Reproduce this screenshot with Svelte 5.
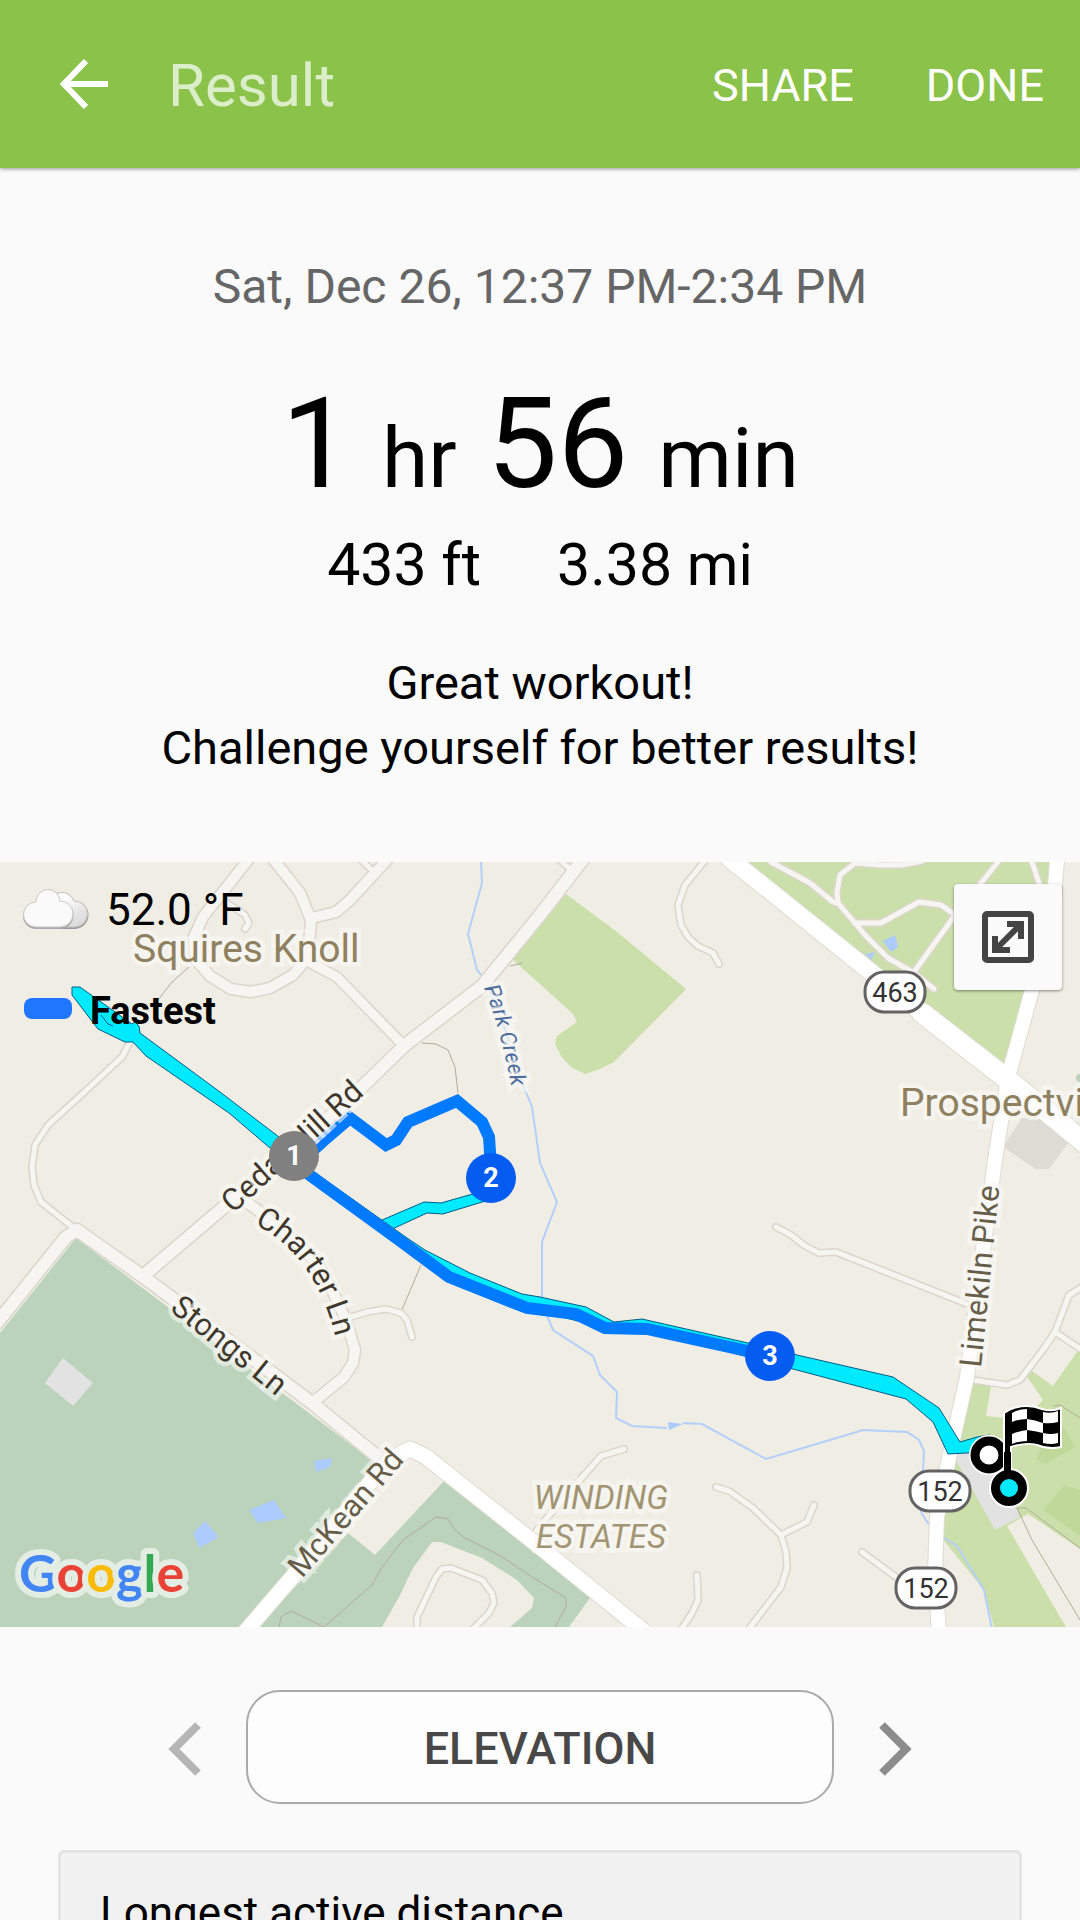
<script>
  const stats = [
    { id: 'elevation', text: '433 ft' },
    { id: 'distance', text: '3.38 mi' }
  ];

  // Minor roads: w is the width of the light inner line
  const streets = [
    { w: 5, d: 'M130 180 L122 195 L79 235 L48 263 L35 283 L32 305 L34 323 L41 340 L74 366' },
    { w: 5, d: 'M227 41 L245 53 L249 61 L245 67' },
    { w: 5, d: 'M348 456 L367 450 L386 447 L401 451 L407 458 L412 475' },
    { w: 5, d: 'M624 587 L601 594 L578 620 L540 664 L530 678' },
    { w: 5, d: 'M716 625 L729 629 L753 646 L781 673 L786 690 L787 706 L781 725 L748 768' },
    { w: 5, d: 'M781 673 L807 660 L814 643' },
    { w: 5, d: 'M697 713 L698 738 L692 751 L681 768' },
    { w: 5, d: 'M862 690 L900 718' },
    { w: 5, d: 'M776 365 L791 373 L805 384 L819 391 L836 390 L967 442' },
    { w: 5, d: 'M704 0 L685 23 L678 43 L681 63 L688 75 L698 84 L713 91 L719 102' },
    { w: 5, d: 'M973 518 L1007 523 L1020 518 L1045 485 L1055 470 L1069 433 L1082 425' },
    { w: 5, d: 'M1055 470 L1082 488' },
    { w: 5, d: 'M417 770 V755 L436 715 L442 707 L451 706 L482 718 L492 731 L494 741 L489 751 L472 768' },
    { w: 5, d: 'M771 0 L810 21 L833 40 L838 41 L855 61 L865 73 L888 96 L914 111 L934 127' },
    { w: 5, d: 'M922 -1 L902 3 H881 L855 1 L840 13 L837 30 L838 41' },
    { w: 5, d: 'M855 61 L881 61 L919 40 L941 43 L955 53 L914 110' },
    { w: 5, d: 'M998 0 L981 21 L955 53' },
    { w: 5, d: 'M1032 0 L1040 24' },
    { w: 5, d: 'M560 -2 L572 9' },
    { w: 5, d: 'M360 -3 L374 10' },
    { w: 10, d: 'M248 -2 L203 55 L194 75 L196 98 L210 114 L231 127 L251 130 L270 126 L293 113 L308 95 L311 58 L300 31 L273 -3' },
    { w: 10, d: 'M312 56 L336 50 L348 40 L387 -2' },
    { w: 9, d: 'M305 98 L337 115 L405 185' },
    { w: 10, d: 'M238 335 L255 346 L300 384 L318 402 L332 428 L346 458 L355 488 L353 501 L344 515 L312 541' },
    { w: 12, d: 'M143 414 L238 333 L294 288 L365 222 L405 183 L482 124 L540 53 L584 -4' },
    { w: 12, d: 'M-4 462 L66 375 L77 368 L91 378 L145 416 L312 541 L384 600' }
  ];

  const highways = [
    { w: 15, d: 'M245 770 L300 706 L372 618 L389 598 L410 587 L425 594 L540 685 L645 770' },
    { w: 17, d: 'M730 -3 L872 111 L922 151' },
    { w: 20, d: 'M922 151 L1007 217 L1086 282' },
    { w: 14, d: 'M1057 -2 L1053 50 L1032 128 L1020 172 L1008 215 L995 298 L983 388 L974 460 L967 515 L950 591 L937 655 L935 711 L939 770' }
  ];

  const trails = [
    'M189 105 L172 120 L158 138',
    'M422 181 L436 182 L448 188 L455 205 L458 231',
    'M421 403 L401 450',
    'M510 104 L522 101',
    'M279 765 L281 755 L291 749 L324 765 L372 723 L382 705 L403 678 L436 655 L448 657 L455 668 L465 676 L499 693 L540 720 L566 736 L566 745 L555 765',
    'M1017 646 L1026 646 L1080 686',
    'M1017 646 L1032 678 L1080 758',
    'M1053 544 L1060 543 L1080 556'
  ];

  const ponds = [
    '883,79 895,73 898,85 891,90',
    '865,92 875,90 871,98',
    '314,599 332,596 330,605 316,610',
    '249,648 274,638 286,656 258,661',
    '193,671 205,659 219,675 199,686',
    '668,560 683,562 669,568'
  ];

  const shields = [
    { x: 895, y: 130, text: '463' },
    { x: 940, y: 629, text: '152' },
    { x: 926, y: 726, text: '152' }
  ];

  const markers = [
    { x: 294, y: 294, text: '1', fill: '#808080' },
    { x: 491, y: 316, text: '2', fill: '#045cf0' },
    { x: 770, y: 494, text: '3', fill: '#045cf0' }
  ];
</script>

<main class="screen">
  <header class="toolbar">
    <button class="icon-button" aria-label="Back">
      <svg width="48" height="50" viewBox="0 0 48 50" fill="none" stroke="#fff" stroke-width="6">
        <path d="M48 25 H5 M26 2 L4 25 L26 48" />
      </svg>
    </button>
    <h1>Result</h1>
    <button class="action">SHARE</button>
    <button class="action">DONE</button>
  </header>

  <section class="summary">
    <p class="date">Sat, Dec 26, 12:37 PM-2:34 PM</p>
    <p class="duration">
      <span>1</span><span class="unit">hr</span><span>56</span><span class="unit">min</span>
    </p>
    <div class="stats">
      {#each stats as stat (stat.id)}
        <span>{stat.text}</span>
      {/each}
    </div>
    <p class="message">Great workout!<br />Challenge yourself for better results!</p>
  </section>

  <section class="map">
    <svg class="canvas" viewBox="0 0 1080 765" role="img" aria-label="Route map">
      <rect width="1080" height="765" fill="#f0ede4" />

      <!-- parks -->
      <g fill="#cbdfab">
        <path d="M735 0 H1054 L1050 60 L1025 130 L1003 210 Z" />
        <path d="M513 98 L540 61 L566 32 L617 70 L686 127 L614 200 L600 207 L585 212 L571 205 L561 194 L555 181 L557 174 L577 160 L573 152 L540 122 Z" />
        <path d="M968 520 L991 524 L986 554 L1003 556 L1036 545 L1043 538 L1026 513 L1032 509 L1053 524 L1080 486 V687 L1028 652 L1007 664 L1066 765 H994 L984 728 L941 675 L936 640 Z" />
      </g>
      <g fill="#c0d99b">
        <path d="M1036 598 L1050 560 L1060 560 L1076 585 L1045 602 Z" />
        <path d="M1064 623 L1043 648 L1080 674 V628 Z" />
      </g>
      <g fill="#bbd3bb">
        <path d="M76 376 L374 600 L372 618 L248 765 H0 V471 Z" />
        <path d="M444 619 L375 693 L348 671 L256 765 H382 L399 735 L413 706 L432 680 H441 L482 696 L517 718 L534 736 L532 746 L510 765 H569 L590 736 L540 691 Z" />
        <circle cx="1080" cy="216" r="4" />
      </g>
      <path d="M63 496 L93 521 L73 544 L45 521 Z M953 593 L995 668 L1020 655 L995 600 L975 585 Z" fill="#e2e2e2" />
      <path d="M1022 256 L1003 285 L1036 307 H1049 L1070 278 L1048 258 Z" fill="#dedad4" />

      <!-- water -->
      <g class="creek">
        <path d="M481 0 L482 21 L468 72 L477 108 L486 118 L506 170 L520 215 L532 245 L540 301 L557 340 L542 380 V435 L548 456 L553 468 L593 494 L600 513 L617 530 L616 556 L632 564 L667 566" />
        <path d="M683 561 L702 562 L766 597 L803 586 L863 568 L907 570 L919 578 L924 589 L921 650 L927 660 L941 674 L957 684 L984 728 L992 767" />
      </g>
      {#each ponds as points}
        <polygon {points} fill="#accbff" />
      {/each}

      <g class="trail">
        {#each trails as d}
          <path {d} />
        {/each}
      </g>

      <!-- roads: casing first, then the surface -->
      <g class="road">
        {#each streets as s}
          <path d={s.d} stroke="#dbd6cb" stroke-width={s.w + 3} />
        {/each}
        {#each streets as s}
          <path d={s.d} stroke="#f7f5f1" stroke-width={s.w} />
        {/each}
        {#each highways as h}
          <path d={h.d} stroke="#dfdad0" stroke-width={h.w + 2} />
        {/each}
        {#each highways as h}
          <path d={h.d} stroke="#fff" stroke-width={h.w} />
        {/each}
      </g>

      <!-- track -->
      <g fill="#00eaff" stroke="#045c86" stroke-width="1">
        <path d="M72 125 H80 L132 162 L135 160 L139 164 L140 171 L220 230 L279 275 L294 288 L284 298 L270 286 L229 251 L146 194 L133 180 H125 L98 167 L72 133 Z" />
        <path d="M382 358 L424 340 L441 341 L490 327 L492 337 L443 352 L427 351 L388 369 Z" />
        <path d="M300 300 L410 378 L425 388 L470 411 L522 432 L540 435 L586 445 L614 460 L642 457 L748 481 L797 493 L893 515 L939 546 L960 580 L977 575 L990 573 L985 590 L948 592 L933 560 L906 537 L793 507 L647 468 L605 466 L527 446 L449 415 Z" />
      </g>
      <path d="M101 153 L108 162 L113 164" fill="none" stroke="#045c86" />
      <g class="fast">
        <path d="M294 301 L311 314 L399 378 L449 415 L527 446 L576 452 L605 466 L647 467 L770 494" />
        <path d="M300 300 L322 280 L350 256 L386 283 L396 278 L408 260 L457 239 L482 260 L489 275 L491 305" />
      </g>

      <defs>
        <path id="cedar" d="M233 352 L375 223" />
        <path id="charter" d="M254 362 Q318 394 337 482" />
        <path id="stongs" d="M169 448 L296 550" />
        <path id="mckean" d="M302 717 L414 588" />
        <path id="limekiln" d="M981 506 L1001 310" />
        <path id="park" d="M484 126 Q500 165 513 232" />
      </defs>
      <g class="label road-name">
        <text><textPath href="#cedar">Cedar Hill Rd</textPath></text>
        <text><textPath href="#charter">Charter Ln</textPath></text>
        <text><textPath href="#stongs">Stongs Ln</textPath></text>
      </g>
      <g class="label road-name major">
        <text><textPath href="#mckean">McKean Rd</textPath></text>
        <text><textPath href="#limekiln">Limekiln Pike</textPath></text>
      </g>
      <text class="label water-name"><textPath href="#park">Park Creek</textPath></text>
      <g class="label place">
        <text x="133" y="100">Squires Knoll</text>
        <text x="900" y="254">Prospectville</text>
      </g>
      <g class="label area" text-anchor="middle">
        <text x="601" y="647">WINDING</text>
        <text x="601" y="686">ESTATES</text>
      </g>

      {#each shields as s}
        <rect x={s.x - 30} y={s.y - 20} width="60" height="40" rx="19" fill="#fff" stroke="#636363" stroke-width="3" />
        <text class="shield" x={s.x} y={s.y + 10} text-anchor="middle">{s.text}</text>
      {/each}

      {#each markers as m}
        <circle cx={m.x} cy={m.y} r="25" fill={m.fill} />
        <text class="marker" x={m.x} y={m.y + 9} text-anchor="middle">{m.text}</text>
      {/each}

      <!-- start and finish -->
      <circle cx="989" cy="593" r="14" fill="#fff" stroke="#fff" stroke-width="12" />
      <circle cx="989" cy="593" r="14" fill="#fff" stroke="#000" stroke-width="9" />
      <g stroke="#fff" stroke-width="2">
        <path d="M1004 551 L1011 547 Q1027 541 1042 547 Q1052 550 1061 546 V585 Q1048 588 1037 583 Q1026 580 1011 585 V612 H1004 Z" />
        <circle cx="1009" cy="626" r="19" />
      </g>
      <path d="M1004 590 H1011 V612 H1004 Z" />
      <circle cx="1009" cy="626" r="9" fill="#00eaff" />
      <g fill="#fff">
        <path d="M1012 551 Q1019 547 1027 547 V557 Q1019 557 1012 560 Z" />
        <path d="M1027 557 Q1035 558 1043 561 V571 Q1035 569 1027 568 Z" />
        <path d="M1043 550 Q1051 552 1058 549 V560 Q1051 562 1043 561 Z" />
        <path d="M1012 572 Q1019 569 1027 568 V579 Q1019 579 1012 582 Z" />
        <path d="M1043 571 Q1051 573 1058 571 V581 Q1051 583 1043 581 Z" />
      </g>

      <text class="logo" x="19" y="730"><tspan fill="#4285f4">G</tspan><tspan fill="#ea4335">o</tspan><tspan fill="#fbbc05">o</tspan><tspan fill="#4285f4">g</tspan><tspan fill="#34a853">l</tspan><tspan fill="#ea4335">e</tspan></text>
    </svg>

    <div class="overlay">
      <div class="weather">
        <svg width="68" height="46" viewBox="0 0 68 46">
          <defs>
            <linearGradient id="cloudBack" x1="0" y1="0" x2="1" y2="1">
              <stop offset="0.3" stop-color="#fff" />
              <stop offset="1" stop-color="#d2d2d2" />
            </linearGradient>
          </defs>
          <path d="M28 42 A13 13 0 0 1 27 16 A13 13 0 0 1 52 14 A13 13 0 0 1 53 42 Z" fill="#999" />
          <path d="M28 40 A12 12 0 0 1 27 16 A13 13 0 0 1 52 14 A13 13 0 0 1 53 40 Z" fill="url(#cloudBack)" stroke="#c4c2be" />
          <path d="M14 42 A13 13 0 0 1 14 16 A12 12 0 0 1 38 15 A13 13 0 0 1 38 42 Z" fill="#aaa" />
          <path d="M14 40 A12 12 0 0 1 14 15 A12 12 0 0 1 38 14 A13 13 0 0 1 38 40 Z" fill="#fafafa" stroke="#c9c7c3" />
        </svg>
        <span>52.0 °F</span>
      </div>
      <div class="legend">
        <span class="swatch"></span>
        <span class="name">Fastest</span>
      </div>
    </div>

    <button class="expand" aria-label="Expand map">
      <svg width="52" height="52" viewBox="0 0 52 52" fill="none" stroke="#444" stroke-width="6">
        <rect x="3" y="3" width="46" height="46" rx="2" />
        <path d="M14 38 L38 14 M25 13 H39 V28 M13 25 V39 H28" />
      </svg>
    </button>
  </section>

  <nav class="pager">
    <button class="icon-button" aria-label="Previous chart">
      <svg width="34" height="56" viewBox="0 0 34 56" fill="none" stroke="#b5b5b5" stroke-width="8">
        <path d="M30 4 L6 28 L30 52" />
      </svg>
    </button>
    <button class="chart">ELEVATION</button>
    <button class="icon-button" aria-label="Next chart">
      <svg width="34" height="56" viewBox="0 0 34 56" fill="none" stroke="#8c8c8c" stroke-width="8">
        <path d="M4 4 L28 28 L4 52" />
      </svg>
    </button>
  </nav>

  <section class="card">
    <h2>Longest active distance</h2>
  </section>
</main>

<style>
  :global(body) {
    background: #fafafa;
  }

  .screen {
    height: 100vh;
    overflow: hidden;
    display: flex;
    flex-direction: column;
    font-family: Roboto, 'Noto Sans', sans-serif;
    color: #000;
    background: #fafafa;
  }

  .screen > * {
    flex-shrink: 0;
  }

  h1,
  h2,
  p {
    margin: 0;
    font-weight: 400;
  }

  button {
    font: inherit;
    border: none;
    background: none;
    padding: 0;
    cursor: pointer;
  }

  svg {
    display: block;
  }

  .toolbar {
    display: flex;
    align-items: center;
    height: 168px;
    padding: 0 36px 0 60px;
    box-sizing: border-box;
    color: #fff;
    background: #8bc34a;
    box-shadow: 0 1px 4px rgba(0, 0, 0, 0.4);
  }

  .toolbar h1 {
    flex: 1;
    margin-left: 60px;
    padding-top: 4px;
    font-size: 60px;
    line-height: 72px;
    opacity: 0.7;
  }

  .action {
    margin-left: 72px;
    padding-top: 4px;
    color: #fff;
    font-size: 45px;
    line-height: 56px;
  }

  .summary {
    display: flex;
    flex-direction: column;
    align-items: center;
    padding: 91px 40px 82px;
    text-align: center;
  }

  .date {
    color: #666;
    font-size: 48px;
    line-height: 56px;
  }

  .duration {
    display: flex;
    align-items: baseline;
    gap: 30px;
    margin-top: 55px;
    font-size: 126px;
    line-height: 148px;
  }

  .unit {
    font-size: 84px;
    line-height: 96px;
  }

  .stats {
    display: flex;
    gap: 76px;
    margin-top: 12px;
    font-size: 59px;
    line-height: 70px;
  }

  .message {
    margin-top: 50px;
    font-size: 47px;
    line-height: 65px;
  }

  .map {
    position: relative;
    overflow: hidden;
  }

  .canvas {
    width: 100%;
    height: auto;
  }

  .creek path {
    fill: none;
    stroke: #b3d0fa;
    stroke-width: 2;
  }

  .trail path {
    fill: none;
    stroke: #b5aa98;
    stroke-width: 1;
  }

  .road path {
    fill: none;
    stroke-linecap: round;
    stroke-linejoin: round;
  }

  .fast path {
    fill: none;
    stroke: #007aff;
    stroke-width: 12;
  }

  .label {
    stroke: rgba(250, 249, 246, 0.6);
    stroke-width: 9px;
    paint-order: stroke;
  }

  .road-name {
    fill: #3f372b;
    font-size: 31px;
  }

  .major {
    fill: #665e48;
  }

  .water-name {
    fill: #4d6b9c;
    font-size: 22px;
    font-style: italic;
  }

  .place {
    fill: #8f8160;
    font-size: 39px;
  }

  .area {
    fill: #a39573;
    font-size: 33px;
    font-style: italic;
  }

  .shield {
    fill: #333;
    font-size: 27px;
  }

  .marker {
    fill: #fff;
    font-size: 27px;
    font-weight: 700;
  }

  .logo {
    font-family: Lato, Roboto, sans-serif;
    font-size: 52px;
    font-weight: 700;
    stroke: #e4ede3;
    stroke-width: 12px;
    stroke-linejoin: round;
    paint-order: stroke;
  }

  .overlay {
    position: absolute;
    top: 20px;
    left: 22px;
  }

  .weather {
    display: flex;
    align-items: center;
    gap: 16px;
    font-size: 44px;
    line-height: 56px;
  }

  .legend {
    display: flex;
    align-items: center;
    gap: 18px;
    margin: 45px 0 0 2px;
    font-size: 38px;
    font-weight: 700;
    line-height: 44px;
  }

  .legend .name {
    padding-top: 6px;
  }

  .swatch {
    width: 48px;
    height: 21px;
    border-radius: 8px;
    background: #2176ff;
  }

  .expand {
    position: absolute;
    top: 22px;
    right: 18px;
    display: grid;
    place-items: center;
    width: 108px;
    height: 106px;
    border-radius: 4px;
    background: #fafafa;
    box-shadow: 0 1px 3px rgba(0, 0, 0, 0.45);
  }

  .pager {
    display: flex;
    align-items: center;
    justify-content: center;
    gap: 44px;
    padding: 63px 40px 46px;
  }

  .pager .icon-button {
    padding-top: 4px;
  }

  .chart {
    flex: 0 1 588px;
    box-sizing: border-box;
    height: 114px;
    padding-top: 2px;
    border: 2px solid #aaa;
    border-radius: 34px;
    color: #484848;
    background: #fdfdfd;
    font-size: 45px;
    font-weight: 500;
  }

  .card {
    margin: 0 58px;
    padding: 32px 39px;
    border: 3px solid #e4e4e4;
    border-radius: 6px;
    background: #f1f1f1;
  }

  .card h2 {
    font-size: 44px;
    line-height: 56px;
  }
</style>
